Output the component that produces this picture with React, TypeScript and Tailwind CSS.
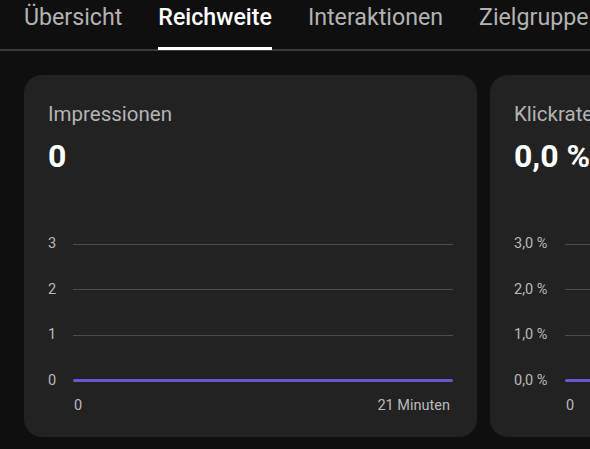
import React from 'react';

const tabs = ['Übersicht', 'Reichweite', 'Interaktionen', 'Zielgruppe'];

type CardProps = {
  title: string;
  value: string;
  yLabels: string[];
  xStart: string;
  xEnd?: string;
  labelWidth: string;
};

function MetricCard({ title, value, yLabels, xStart, xEnd, labelWidth }: CardProps) {
  return (
    <div className="w-[453px] h-[362px] shrink-0 rounded-[18px] bg-[#222222] pt-[27px] pl-[24px] pr-[24px]">
      <div className="text-[20.5px] leading-[24px] text-[#b4b4b4] whitespace-nowrap">{title}</div>
      <div className="mt-[12px] text-[32px] leading-[36px] font-bold text-white whitespace-nowrap">{value}</div>

      <div className="mt-[62px] flex flex-col gap-[29.5px]">
        {yLabels.map((label, i) => {
          const isZero = i === yLabels.length - 1;
          return (
            <div key={label} className="flex items-center h-[16px]">
              <div className={`${labelWidth} shrink-0 text-[14.5px] leading-[16px] text-[#bababa] whitespace-nowrap`}>
                {label}
              </div>
              {isZero ? (
                <div className="flex-1 h-[3px] rounded-full bg-[#6557d4]" />
              ) : (
                <div className="flex-1 h-px bg-[#4c4c4c]" />
              )}
            </div>
          );
        })}
      </div>

      <div className="mt-[9px] flex items-center h-[16px]">
        <div className={`${labelWidth} shrink-0`} />
        <div className="flex-1 flex justify-between pl-[1px] pr-[3px] text-[14.5px] leading-[16px] text-[#bababa] whitespace-nowrap">
          <span>{xStart}</span>
          {xEnd && <span>{xEnd}</span>}
        </div>
      </div>
    </div>
  );
}

export default function App() {
  return (
    <div
      className="w-[590px] h-[449px] overflow-hidden bg-[#0f0f0f]"
      style={{ fontFamily: 'Roboto, "Noto Sans", sans-serif' }}
    >
      <div className="h-[51px] border-b-2 border-[#3a3a3a] flex gap-[36px] pl-[24px] whitespace-nowrap">
        {tabs.map((tab) => {
          const active = tab === 'Reichweite';
          return (
            <div key={tab} className="relative flex flex-col shrink-0">
              <span
                className={`pt-[3px] text-[23.2px] leading-[28px] ${
                  active ? 'text-white font-medium' : 'text-[#b3b3b3]'
                }`}
              >
                {tab}
              </span>
              {active && <div className="absolute left-0 right-0 -bottom-[1px] h-[3px] bg-white" />}
            </div>
          );
        })}
      </div>

      <div className="mt-[24px] flex gap-[13px] pl-[24px]">
        <MetricCard
          title="Impressionen"
          value="0"
          yLabels={['3', '2', '1', '0']}
          xStart="0"
          xEnd="21 Minuten"
          labelWidth="w-[25px]"
        />
        <MetricCard
          title="Klickrate"
          value="0,0 %"
          yLabels={['3,0 %', '2,0 %', '1,0 %', '0,0 %']}
          xStart="0"
          labelWidth="w-[51px]"
        />
      </div>
    </div>
  );
}
